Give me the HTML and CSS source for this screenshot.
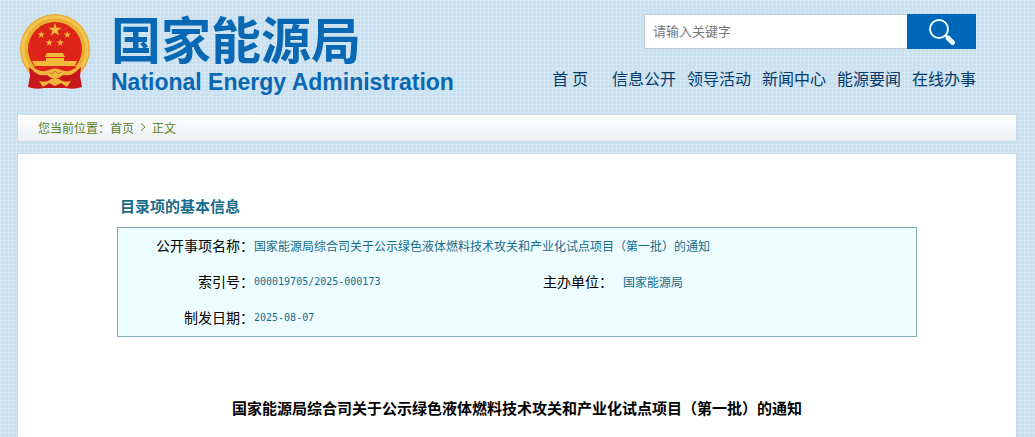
FILE: index.html
```html
<!DOCTYPE html>
<html lang="zh-CN">
<head>
    <meta charset="UTF-8">
    <meta name="viewport" content="width=device-width, initial-scale=1.0">
    <title>国家能源局</title>
    <link rel="stylesheet" href="styles.css">
</head>
<body>
    <div class="page">
        <header class="header">
            <div class="logo">
                <svg class="emblem" viewBox="0 0 70 75" aria-hidden="true">
                    <circle cx="35" cy="35" r="35" fill="#e9ae33"/>
                    <circle cx="35" cy="35" r="32" fill="none" stroke="#f4c452" stroke-width="3"/>
                    <circle cx="35" cy="35" r="27" fill="#dc2418"/>
                    <g fill="#f2b93b">
                        <path id="star" d="M35 9 L36.600 13.700 L41.500 13.800 L37.600 16.800 L39 21.500 L35 18.700 L31 21.500 L32.400 16.800 L28.500 13.800 L33.400 13.700 Z"/>
                        <use href="#star" transform="translate(2 12) scale(.55)"/>
                        <use href="#star" transform="translate(28 12) scale(.55)"/>
                        <use href="#star" transform="translate(10 20) scale(.55)"/>
                        <use href="#star" transform="translate(21 20) scale(.55)"/>
                        <path d="M27 39 H43 L45 43 H25 Z"/>
                        <path d="M26 44 H44 V48 H26 Z"/>
                        <path d="M12 47 H57 L55 52 H15 Z"/>
                    </g>
                    <path d="M13 53 H57 L49 60 H21 Z" fill="#dc2418"/>
                    <path d="M9 53 Q16 60 26 61 L44 61 Q54 60 61 53 L60 62 L62 73 Q54 76 46 74 L24 74 Q16 76 8 73 L10 62 Z" fill="#c8161d"/>
                    <path d="M10 50 Q19 60 29 56 Q35 53 41 56 Q51 60 60 50 Q57 63 43 61 Q38 65 35 65 Q32 65 27 61 Q13 63 10 50 Z" fill="#f0b63c"/>
                    <path d="M29 58 L32 60 L35 57 L38 60 L41 58" fill="none" stroke="#c88224"/>
                    <path d="M19 67 Q27 69 31 65 H39 Q43 69 51 67 L47 73 L41 69 L35 72 L29 69 L23 73 Z" fill="#f0b63c"/>
                </svg>
                <div class="names">
                    <div class="name-cn">国家能源局</div>
                    <div class="name-en">National Energy Administration</div>
                </div>
            </div>
            <div class="tools">
                <form class="search">
                    <input type="text" class="keyword" placeholder="请输入关键字" aria-label="请输入关键字">
                    <button type="button" class="search-btn" aria-label="搜索">
                        <svg class="search-icon" viewBox="0 0 28 28" aria-hidden="true">
                            <circle cx="11" cy="11" r="9" fill="none" stroke="#e8fbff" stroke-width="2"/>
                            <path d="M17.500 17.500 L20 20" stroke="#e8fbff" stroke-width="2"/>
                            <path d="M20 20 L24.500 24.500" stroke="#e8fbff" stroke-width="5" stroke-linecap="round"/>
                        </svg>
                    </button>
                </form>
                <nav class="nav">
                    <a href="#" class="home">首 页</a>
                    <a href="#">信息公开</a>
                    <a href="#">领导活动</a>
                    <a href="#">新闻中心</a>
                    <a href="#">能源要闻</a>
                    <a href="#">在线办事</a>
                </nav>
            </div>
        </header>

        <div class="crumbs">
            <span>您当前位置：</span><a href="#">首页</a>
            <svg class="arrow" viewBox="0 0 6 8" aria-hidden="true"><path d="M1 0.500 L5 4 L1 7.500" fill="none" stroke="#5c7f1c"/></svg>
            <span>正文</span>
        </div>

        <main class="content">
            <section class="info">
                <h2>目录项的基本信息</h2>
                <table>
                    <tr>
                        <th scope="row">公开事项名称：</th>
                        <td colspan="3">国家能源局综合司关于公示绿色液体燃料技术攻关和产业化试点项目（第一批）的通知</td>
                    </tr>
                    <tr>
                        <th scope="row">索引号：</th>
                        <td class="num">000019705/2025-000173</td>
                        <th scope="row" class="second">主办单位：</th>
                        <td>国家能源局</td>
                    </tr>
                    <tr>
                        <th scope="row">制发日期：</th>
                        <td class="num" colspan="3">2025-08-07</td>
                    </tr>
                </table>
            </section>
            <h1>国家能源局综合司关于公示绿色液体燃料技术攻关和产业化试点项目（第一批）的通知</h1>
        </main>
    </div>
</body>
</html>
```
FILE: styles.css
```css
* {
    box-sizing: border-box;
}

body {
    margin: 0;
    padding: 0 18px 0 17px;
    font-family: "Noto Sans CJK SC", sans-serif;
    font-size: 12px;
    background-color: #c9e0f0;
    background-image:
        repeating-linear-gradient(0deg, rgba(255, 255, 255, 0.16) 0 1px, transparent 1px 4px),
        repeating-linear-gradient(90deg, rgba(255, 255, 255, 0.16) 0 1px, transparent 1px 4px);
}

a {
    color: inherit;
    text-decoration: none;
}

.page {
    max-width: 1000px;
    margin: 0 auto;
}

/* header */
.header {
    display: flex;
    justify-content: space-between;
    height: 114px;
    padding: 14px 41px 0 3px;
}

.logo {
    display: flex;
    gap: 21px;
}

.emblem {
    width: 70px;
    height: 75px;
}

.name-cn {
    font-size: 50px;
    font-weight: bold;
    line-height: 46px;
    color: #0868b3;
}

.name-en {
    margin-top: 9px;
    font-family: "Liberation Sans", Arial, sans-serif;
    font-size: 23px;
    font-weight: bold;
    line-height: 26px;
    white-space: nowrap;
    color: #0868b3;
}

.tools {
    display: flex;
    flex-direction: column;
    align-items: flex-end;
    gap: 17px;
}

.search {
    display: flex;
    width: 332px;
    height: 35px;
}

.keyword {
    flex: 1;
    min-width: 0;
    padding: 0 8px 2px;
    border: 1px solid #c3cbd5;
    border-right: 0;
    font-family: inherit;
    font-size: 13px;
    background: #fff;
}

.keyword::placeholder {
    color: #777;
}

.search-btn {
    width: 69px;
    padding: 0;
    border: 0;
    background: #0066b8;
    cursor: pointer;
}

.search-icon {
    display: block;
    width: 28px;
    height: 28px;
    margin: 0 auto;
}

.nav {
    display: flex;
    gap: 11px;
    font-size: 16px;
    line-height: 24px;
    white-space: nowrap;
    color: #053a6b;
}

.home {
    margin-right: 13px;
}

/* breadcrumb */
.crumbs {
    display: flex;
    align-items: center;
    height: 28px;
    padding: 0 20px 2px;
    border: 1px solid #cbd9e6;
    background: linear-gradient(#fff, #eaf0f5);
    color: #5c7f1c;
}

.arrow {
    width: 6px;
    height: 8px;
    margin: 0 6px;
}

/* content */
.content {
    min-height: 284px;
    margin-top: 11px;
    padding: 41px 99px 16px;
    border: 1px solid #cbd9e6;
    border-bottom: 0;
    background: #fff;
}

.info h2 {
    margin: 0 0 11px;
    padding-left: 3px;
    font-size: 15px;
    line-height: 21px;
    color: #176b8b;
}

.info table {
    width: 100%;
    border: 1px solid #82aab3;
    border-spacing: 0;
    background: #edfcfe;
    color: #176b8b;
}

.info th,
.info td {
    height: 36px;
    padding: 0 0 2px;
}

.info th {
    width: 136px;
    font-size: 14px;
    font-weight: normal;
    text-align: right;
    color: #000;
}

.info .second {
    width: 80px;
    padding-right: 10px;
}

.info .num {
    width: 289px;
    font-family: "DejaVu Sans Mono", monospace;
    font-size: 10px;
}

h1 {
    margin: 60px 0 0;
    font-size: 15px;
    line-height: 22px;
    text-align: center;
    color: #000;
}
```
